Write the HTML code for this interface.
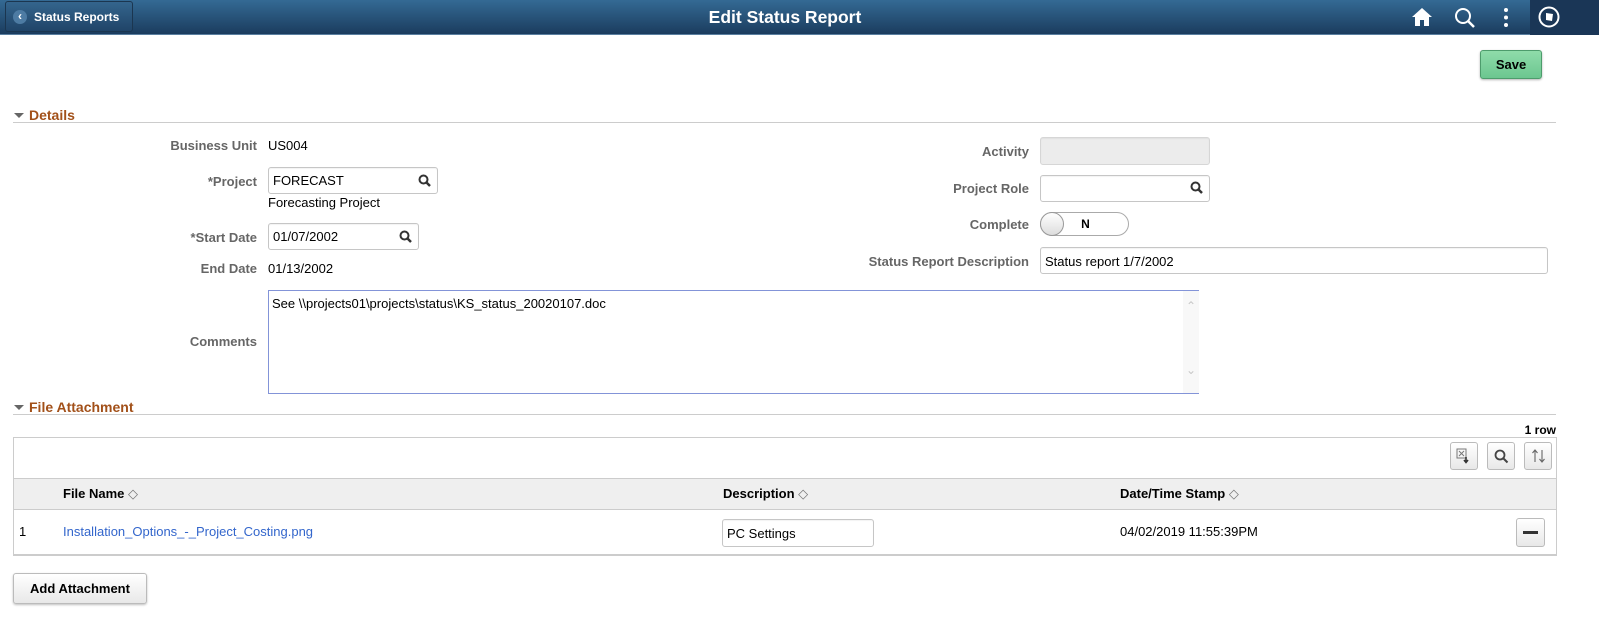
<!DOCTYPE html>
<html><head><style>
*{box-sizing:border-box;margin:0;padding:0}
body{width:1599px;height:636px;position:relative;background:#fff;font-family:"Liberation Sans",Arial,sans-serif;font-size:13px;color:#000;overflow:hidden}
.a{position:absolute}
.hdr{left:0;top:0;width:1599px;height:35px;background:linear-gradient(#346a94,#1b3c5e);border-bottom:1px solid #5a7fa0}
.lbl{position:absolute;font-weight:bold;color:#666;font-size:13px;text-align:right}
.val{position:absolute;font-size:13px;color:#000}
.inp{position:absolute;border:1px solid #c6c6c6;border-radius:3px;background:#fff;font-size:13px;padding:5px 4px 0;box-shadow:inset 0 1px 1px rgba(0,0,0,.05)}
.sec{position:absolute;left:13px;width:1543px;border-bottom:1px solid #ccc;height:14px;font-weight:bold;color:#a25019;font-size:14px;padding-left:16px;line-height:12px}
.sec:before{content:"";position:absolute;left:1px;top:4px;border-left:5px solid transparent;border-right:5px solid transparent;border-top:5px solid #666}
.btn{position:absolute;border:1px solid #bbb;border-radius:3px;background:linear-gradient(#fff,#e8e8e8);box-shadow:0 1px 2px rgba(0,0,0,.25)}
.th{position:absolute;top:486px;font-weight:bold;font-size:13px}
</style></head><body>
<div class="a hdr"></div>
<div class="a" style="left:1530px;top:0;width:69px;height:35px;background:#1a3656"></div>
<div class="a" style="left:5px;top:1px;width:128px;height:31px;border:1px solid #1b3650;border-radius:3px;background:linear-gradient(#34658d,#204468)"></div>
<div class="a" style="left:13px;top:10px;width:14px;height:14px;border-radius:50%;background:#4d7ba3;color:#fff;font-size:12px;font-weight:bold;text-align:center;line-height:13px">&lsaquo;</div>
<div class="a" style="left:34px;top:10px;color:#fff;font-weight:bold;font-size:12px">Status Reports</div>
<div class="a" style="left:0;width:1570px;top:7px;text-align:center;color:#fff;font-weight:bold;font-size:17.5px">Edit Status Report</div>
<svg class="a" style="left:1410px;top:6px" width="24" height="22" viewBox="0 0 24 22"><path d="M12 2 L2 11 L5 11 L5 20 L10 20 L10 14 L14 14 L14 20 L19 20 L19 11 L22 11 Z" fill="#fff"/></svg>
<svg class="a" style="left:1453px;top:6px" width="24" height="24" viewBox="0 0 24 24"><circle cx="10" cy="10" r="7" stroke="#fff" stroke-width="2" fill="none"/><path d="M15 15 L21 21" stroke="#fff" stroke-width="2.5"/></svg>
<svg class="a" style="left:1502px;top:7px" width="8" height="22"><circle cx="4" cy="3" r="2" fill="#fff"/><circle cx="4" cy="10.5" r="2" fill="#fff"/><circle cx="4" cy="18" r="2" fill="#fff"/></svg>
<svg class="a" style="left:1537px;top:5px" width="24" height="24" viewBox="0 0 24 24"><circle cx="12" cy="12" r="9.5" stroke="#fff" stroke-width="2" fill="none"/><path d="M9 8 L16 9 L15 16 L9 15 Z" fill="#fff"/></svg>

<div class="a" style="left:1480px;top:50px;width:62px;height:29px;border:1px solid #4d9c6c;border-radius:3px;background:linear-gradient(#8fdcaa,#6cc690);box-shadow:0 1px 2px rgba(0,0,0,.3);text-align:center;font-weight:bold;font-size:13px;line-height:27px">Save</div>

<div class="sec" style="top:109px">Details</div>
<div class="lbl" style="right:1342px;top:138px">Business Unit</div>
<div class="val" style="left:268px;top:138px">US004</div>
<div class="lbl" style="right:1342px;top:174px">*Project</div>
<div class="inp" style="left:268px;top:167px;width:170px;height:27px">FORECAST</div>
<svg class="a" style="left:418px;top:174px" width="13" height="13"><circle cx="5.5" cy="5.5" r="4" stroke="#333" stroke-width="2" fill="none"/><path d="M8.5 8.5 L12 12" stroke="#333" stroke-width="2.5"/></svg>
<div class="val" style="left:268px;top:195px">Forecasting Project</div>
<div class="lbl" style="right:1342px;top:230px">*Start Date</div>
<div class="inp" style="left:268px;top:223px;width:151px;height:27px">01/07/2002</div>
<svg class="a" style="left:399px;top:230px" width="13" height="13"><circle cx="5.5" cy="5.5" r="4" stroke="#333" stroke-width="2" fill="none"/><path d="M8.5 8.5 L12 12" stroke="#333" stroke-width="2.5"/></svg>
<div class="lbl" style="right:1342px;top:261px">End Date</div>
<div class="val" style="left:268px;top:261px">01/13/2002</div>
<div class="lbl" style="right:1342px;top:334px">Comments</div>
<div class="a" style="left:268px;top:290px;width:931px;height:104px;border:1px solid #8394d8;border-right:none;background:#fff"></div>
<div class="a" style="left:1183px;top:291px;width:16px;height:102px;background:#f8f8f8;color:#c8c8c8;font-size:12px;text-align:center"><div style="margin-top:8px">&#8963;</div><div style="margin-top:50px">&#8964;</div></div>
<div class="val" style="left:272px;top:296px">See \\projects01\projects\status\KS_status_20020107.doc</div>

<div class="lbl" style="right:570px;top:144px">Activity</div>
<div class="inp" style="left:1040px;top:137px;width:170px;height:28px;background:#ececec;border-color:#d6d6d6"></div>
<div class="lbl" style="right:570px;top:181px">Project Role</div>
<div class="inp" style="left:1040px;top:175px;width:170px;height:27px"></div>
<svg class="a" style="left:1190px;top:181px" width="13" height="13"><circle cx="5.5" cy="5.5" r="4" stroke="#333" stroke-width="2" fill="none"/><path d="M8.5 8.5 L12 12" stroke="#333" stroke-width="2.5"/></svg>
<div class="lbl" style="right:570px;top:217px">Complete</div>
<div class="a" style="left:1040px;top:212px;width:89px;height:24px;border:1px solid #aaa;border-radius:12px;background:#fff;font-weight:bold;font-size:12px;text-align:center;line-height:22px;padding-left:2px">N</div>
<div class="a" style="left:1040px;top:212px;width:24px;height:24px;border:1px solid #999;border-radius:50%;background:linear-gradient(#fff,#ddd)"></div>
<div class="lbl" style="right:570px;top:254px">Status Report Description</div>
<div class="inp" style="left:1040px;top:247px;width:508px;height:27px;padding-top:6px">Status report 1/7/2002</div>

<div class="sec" style="top:401px">File Attachment</div>
<div class="a" style="right:43px;top:423px;font-weight:bold;font-size:12px">1 row</div>
<div class="a" style="left:13px;top:437px;width:1544px;height:119px;border:1px solid #ccc;border-bottom:2px solid #ccc"></div>
<div class="btn" style="left:1450px;top:442px;width:28px;height:28px;box-shadow:none"></div>
<svg class="a" style="left:1456px;top:448px" width="16" height="16"><rect x="1" y="1" width="9" height="9" fill="none" stroke="#777"/><path d="M3 3 L8 8 M8 3 L3 8" stroke="#777"/><path d="M10 9 L10 14 M8 12 L10 14.5 L12 12" stroke="#333" stroke-width="1.6" fill="none"/></svg>
<div class="btn" style="left:1487px;top:442px;width:28px;height:28px;box-shadow:none"></div>
<svg class="a" style="left:1494px;top:449px" width="15" height="15"><circle cx="6" cy="6" r="4.5" stroke="#444" stroke-width="1.8" fill="none"/><path d="M9.5 9.5 L13.5 13.5" stroke="#444" stroke-width="2"/></svg>
<div class="btn" style="left:1524px;top:442px;width:28px;height:28px;box-shadow:none"></div>
<svg class="a" style="left:1531px;top:448px" width="15" height="16"><path d="M4 14 L4 2 M1.5 5 L4 2 L6.5 5 M11 2 L11 14 M8.5 11 L11 14 L13.5 11" stroke="#666" stroke-width="1.1" fill="none"/></svg>
<div class="a" style="left:14px;top:478px;width:1542px;height:32px;background:#efefef;border-top:1px solid #ccc;border-bottom:1px solid #ccc"></div>
<div class="th" style="left:63px">File Name <span style="color:#777;font-weight:normal">&#9671;</span></div>
<div class="th" style="left:723px">Description <span style="color:#777;font-weight:normal">&#9671;</span></div>
<div class="th" style="left:1120px">Date/Time Stamp <span style="color:#777;font-weight:normal">&#9671;</span></div>
<div class="val" style="left:19px;top:524px">1</div>
<div class="val" style="left:63px;top:524px;color:#3366cc">Installation_Options_-_Project_Costing.png</div>
<div class="inp" style="left:722px;top:519px;width:152px;height:28px;padding-top:6px">PC Settings</div>
<div class="val" style="left:1120px;top:524px">04/02/2019 11:55:39PM</div>
<div class="btn" style="left:1516px;top:518px;width:29px;height:29px;box-shadow:none"></div>
<div class="a" style="left:1523px;top:531px;width:15px;height:3px;background:#333"></div>

<div class="btn" style="left:13px;top:573px;width:134px;height:31px;text-align:center;font-weight:bold;font-size:13px;line-height:29px">Add Attachment</div>
</body></html>
